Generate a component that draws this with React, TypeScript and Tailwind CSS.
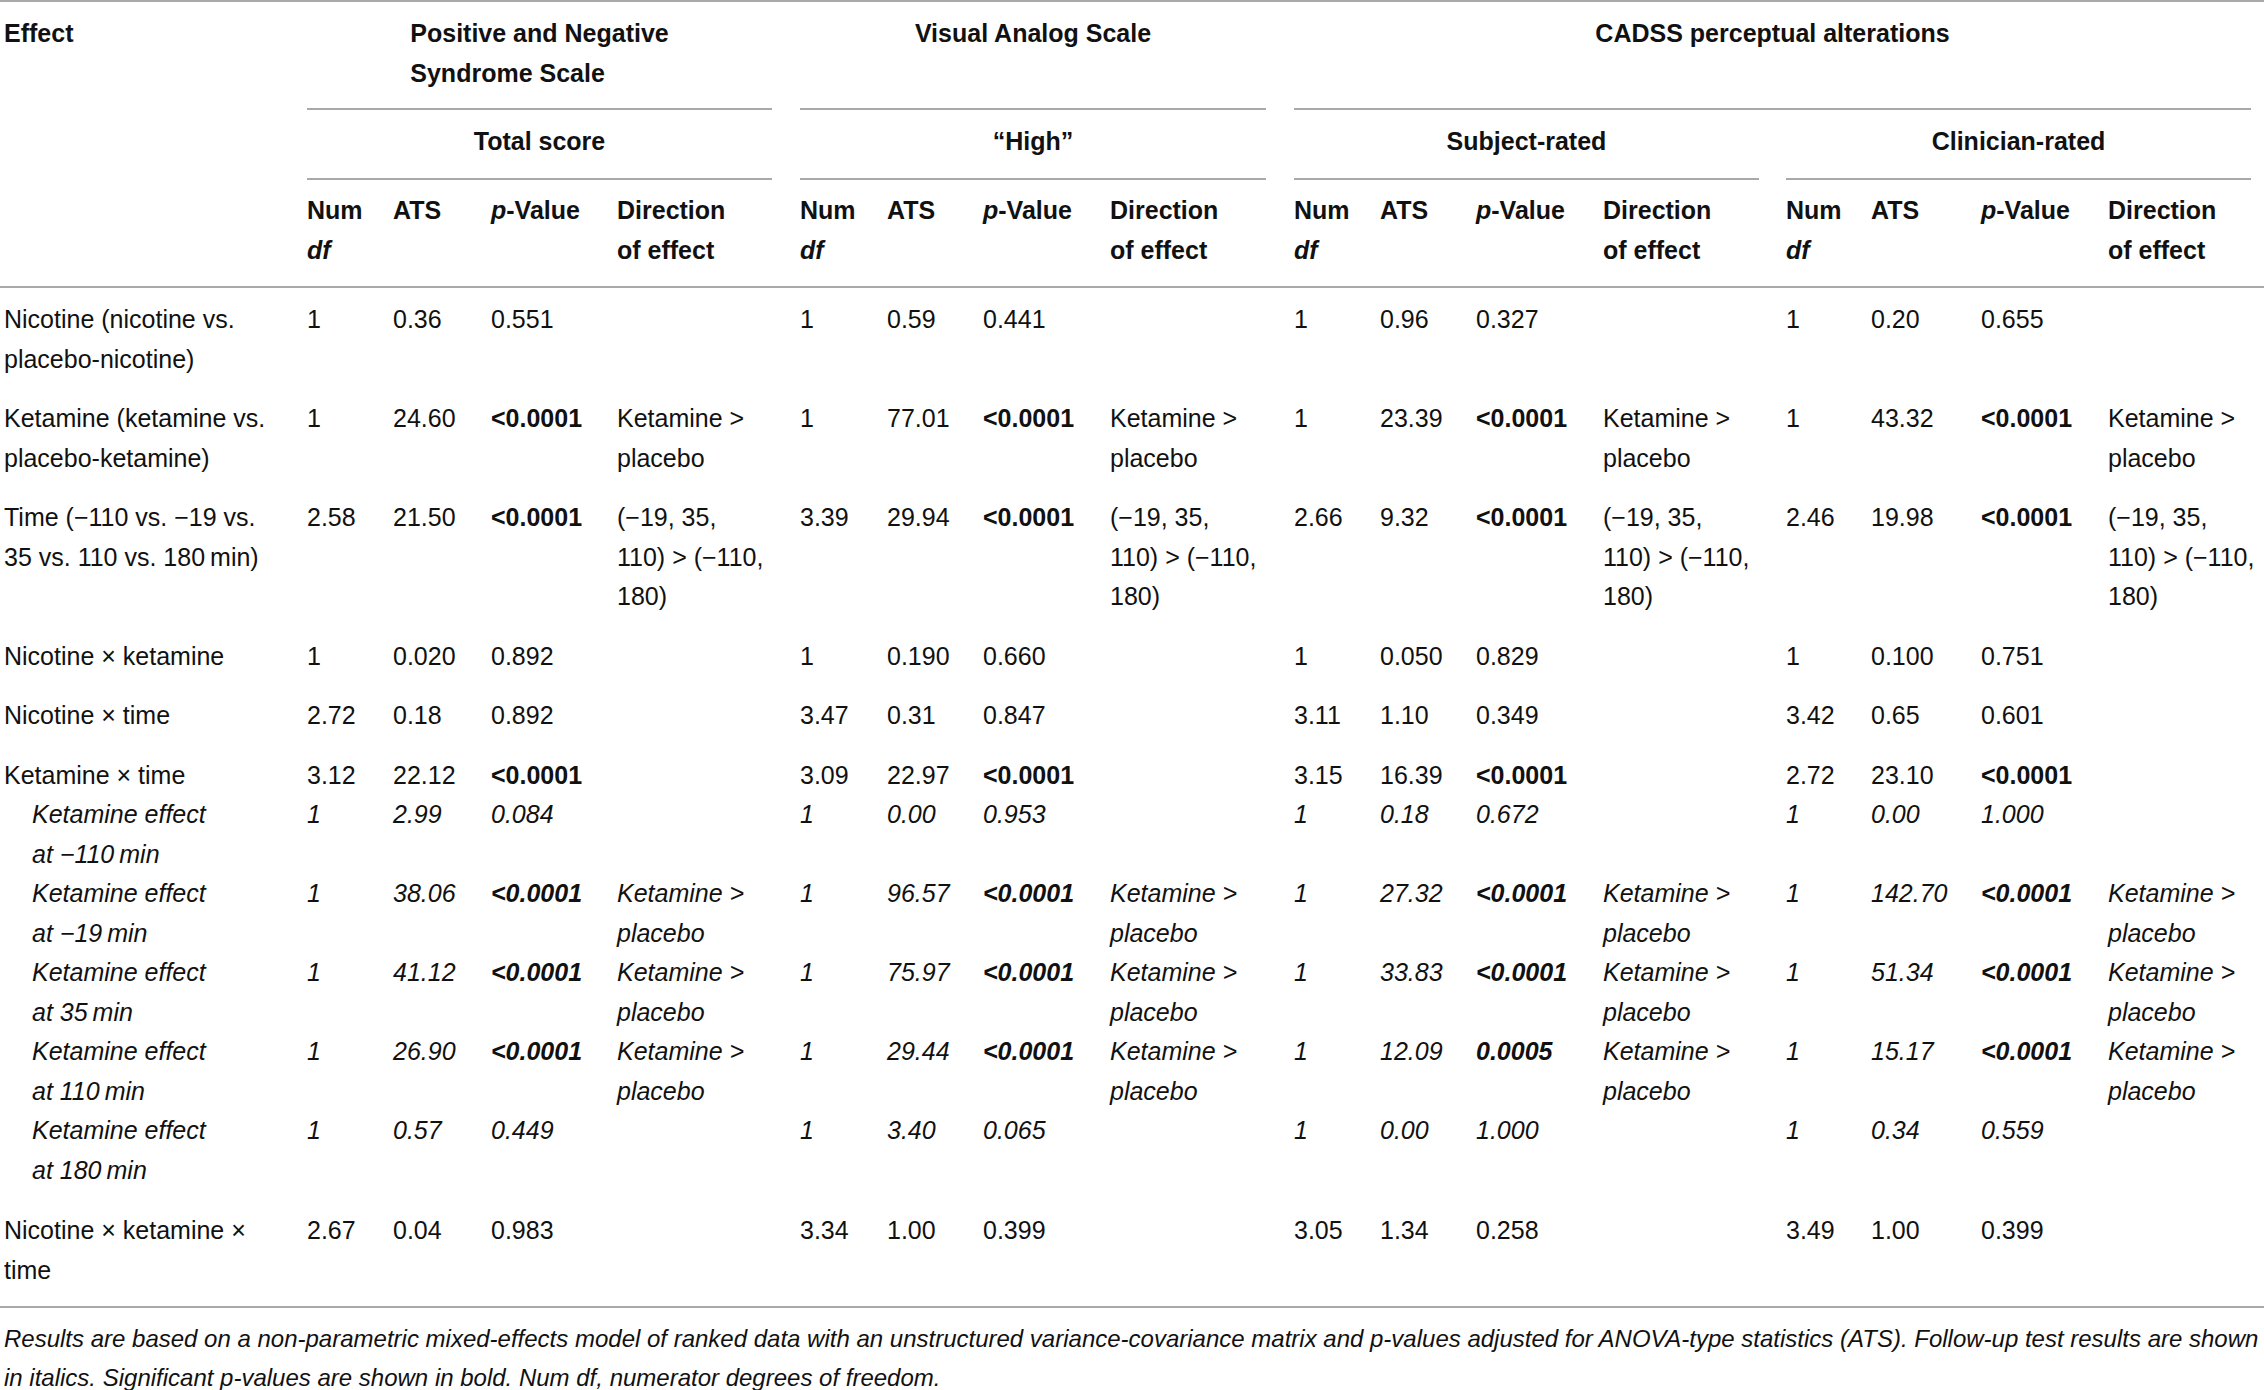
import React from 'react'

const GRID =
  'grid grid-cols-[307px_86px_98px_126px_183px_87px_96px_127px_184px_86px_96px_127px_183px_85px_110px_127px_156px]'

type Stat = [string, string, string, string]

type Row = {
  label: string[]
  sub?: boolean
  pad: string
  groups: [Stat, Stat, Stat, Stat]
}

// direction-of-effect shorthands
const KP = 'kp'
const TM = 'time'

const ROWS: Row[] = [
  {
    label: ['Nicotine (nicotine vs.', 'placebo-nicotine)'],
    pad: 'pt-[12px] pb-[10px]',
    groups: [
      ['1', '0.36', '0.551', ''],
      ['1', '0.59', '0.441', ''],
      ['1', '0.96', '0.327', ''],
      ['1', '0.20', '0.655', ''],
    ],
  },
  {
    label: ['Ketamine (ketamine vs.', 'placebo-ketamine)'],
    pad: 'py-[10px]',
    groups: [
      ['1', '24.60', '*<0.0001', KP],
      ['1', '77.01', '*<0.0001', KP],
      ['1', '23.39', '*<0.0001', KP],
      ['1', '43.32', '*<0.0001', KP],
    ],
  },
  {
    label: ['Time (\u2212110 vs. \u221219 vs.', '35 vs. 110 vs. 180\u2009min)'],
    pad: 'py-[10px]',
    groups: [
      ['2.58', '21.50', '*<0.0001', TM],
      ['3.39', '29.94', '*<0.0001', TM],
      ['2.66', '9.32', '*<0.0001', TM],
      ['2.46', '19.98', '*<0.0001', TM],
    ],
  },
  {
    label: ['Nicotine \u00d7 ketamine'],
    pad: 'py-[10px]',
    groups: [
      ['1', '0.020', '0.892', ''],
      ['1', '0.190', '0.660', ''],
      ['1', '0.050', '0.829', ''],
      ['1', '0.100', '0.751', ''],
    ],
  },
  {
    label: ['Nicotine \u00d7 time'],
    pad: 'py-[10px]',
    groups: [
      ['2.72', '0.18', '0.892', ''],
      ['3.47', '0.31', '0.847', ''],
      ['3.11', '1.10', '0.349', ''],
      ['3.42', '0.65', '0.601', ''],
    ],
  },
  {
    label: ['Ketamine \u00d7 time'],
    pad: 'pt-[10px]',
    groups: [
      ['3.12', '22.12', '*<0.0001', ''],
      ['3.09', '22.97', '*<0.0001', ''],
      ['3.15', '16.39', '*<0.0001', ''],
      ['2.72', '23.10', '*<0.0001', ''],
    ],
  },
  {
    label: ['Ketamine effect', 'at \u2212110\u2009min'],
    sub: true,
    pad: '',
    groups: [
      ['1', '2.99', '0.084', ''],
      ['1', '0.00', '0.953', ''],
      ['1', '0.18', '0.672', ''],
      ['1', '0.00', '1.000', ''],
    ],
  },
  {
    label: ['Ketamine effect', 'at \u221219\u2009min'],
    sub: true,
    pad: '',
    groups: [
      ['1', '38.06', '*<0.0001', KP],
      ['1', '96.57', '*<0.0001', KP],
      ['1', '27.32', '*<0.0001', KP],
      ['1', '142.70', '*<0.0001', KP],
    ],
  },
  {
    label: ['Ketamine effect', 'at 35\u2009min'],
    sub: true,
    pad: '',
    groups: [
      ['1', '41.12', '*<0.0001', KP],
      ['1', '75.97', '*<0.0001', KP],
      ['1', '33.83', '*<0.0001', KP],
      ['1', '51.34', '*<0.0001', KP],
    ],
  },
  {
    label: ['Ketamine effect', 'at 110\u2009min'],
    sub: true,
    pad: '',
    groups: [
      ['1', '26.90', '*<0.0001', KP],
      ['1', '29.44', '*<0.0001', KP],
      ['1', '12.09', '*0.0005', KP],
      ['1', '15.17', '*<0.0001', KP],
    ],
  },
  {
    label: ['Ketamine effect', 'at 180\u2009min'],
    sub: true,
    pad: 'pb-[10px]',
    groups: [
      ['1', '0.57', '0.449', ''],
      ['1', '3.40', '0.065', ''],
      ['1', '0.00', '1.000', ''],
      ['1', '0.34', '0.559', ''],
    ],
  },
  {
    label: ['Nicotine \u00d7 ketamine \u00d7', 'time'],
    pad: 'pt-[11px] pb-[16px]',
    groups: [
      ['2.67', '0.04', '0.983', ''],
      ['3.34', '1.00', '0.399', ''],
      ['3.05', '1.34', '0.258', ''],
      ['3.49', '1.00', '0.399', ''],
    ],
  },
]

function Lines({ lines }: { lines: string[] }) {
  return (
    <>
      {lines.map((l, i) => (
        <React.Fragment key={i}>
          {i > 0 && <br />}
          {l}
        </React.Fragment>
      ))}
    </>
  )
}

function Direction({ kind }: { kind: string }) {
  if (kind === KP) return <Lines lines={['Ketamine >', 'placebo']} />
  if (kind === TM) return <Lines lines={['(\u221219, 35,', '110) > (\u2212110,', '180)']} />
  return null
}

function PValue({ v }: { v: string }) {
  if (v.startsWith('*')) return <span className="font-bold">{v.slice(1)}</span>
  return <>{v}</>
}

function ColHeads() {
  return (
    <>
      <div>
        Num
        <br />
        <i>df</i>
      </div>
      <div>ATS</div>
      <div>
        <i>p</i>-Value
      </div>
      <div>
        Direction
        <br />
        of effect
      </div>
    </>
  )
}

export default function App() {
  return (
    <div className="w-[2264px] min-h-[1390px] bg-white text-[#111] font-['Liberation_Sans',Arial,sans-serif] text-[25px] leading-[39.5px]">
      <div className="border-t-2 border-[#a9a9a9]" />

      {/* header */}
      <div className={`${GRID} border-b-2 border-[#a9a9a9] font-bold`}>
        <div className="row-span-3 pl-[4px] pt-[12px]">Effect</div>

        <div className="col-span-4 mr-[28px] border-b-2 border-[#a9a9a9] pt-[12px] pb-[15px] text-center">
          <span className="inline-block text-left">
            Positive and Negative
            <br />
            Syndrome Scale
          </span>
        </div>
        <div className="col-span-4 mr-[28px] border-b-2 border-[#a9a9a9] pt-[12px] pb-[15px] text-center">
          Visual Analog Scale
        </div>
        <div className="col-span-8 mr-[13px] border-b-2 border-[#a9a9a9] pt-[12px] pb-[15px] text-center">
          CADSS perceptual alterations
        </div>

        <div className="col-span-4 mr-[28px] border-b-2 border-[#a9a9a9] pt-[12px] pb-[16.5px] text-center">
          Total score
        </div>
        <div className="col-span-4 mr-[28px] border-b-2 border-[#a9a9a9] pt-[12px] pb-[16.5px] text-center">
          {'\u201cHigh\u201d'}
        </div>
        <div className="col-span-4 mr-[27px] border-b-2 border-[#a9a9a9] pt-[12px] pb-[16.5px] text-center">
          Subject-rated
        </div>
        <div className="col-span-4 mr-[13px] border-b-2 border-[#a9a9a9] pt-[12px] pb-[16.5px] text-center">
          Clinician-rated
        </div>

        <div className="col-span-16 grid grid-cols-subgrid pt-[11px] pb-[16px]">
          <ColHeads />
          <ColHeads />
          <ColHeads />
          <ColHeads />
        </div>
      </div>

      {/* body */}
      <div className="border-b-2 border-[#a9a9a9]">
        {ROWS.map((row, ri) => (
          <div key={ri} className={`${GRID} ${row.pad} ${row.sub ? 'italic' : ''}`}>
            <div className={row.sub ? 'pl-[32px]' : 'pl-[4px]'}>
              <Lines lines={row.label} />
            </div>
            {row.groups.map((g, gi) => (
              <React.Fragment key={gi}>
                <div>{g[0]}</div>
                <div>{g[1]}</div>
                <div>
                  <PValue v={g[2]} />
                </div>
                <div className="whitespace-nowrap">
                  <Direction kind={g[3]} />
                </div>
              </React.Fragment>
            ))}
          </div>
        ))}
      </div>

      {/* footnote */}
      <p className="pl-[4px] pt-[12px] italic whitespace-nowrap text-[24px] leading-[38.5px]">
        Results are based on a non-parametric mixed-effects model of ranked data with an unstructured
        variance-covariance matrix and p-values adjusted for ANOVA-type statistics (ATS). Follow-up test
        results are shown
        <br />
        in italics. Significant p-values are shown in bold. Num df, numerator degrees of freedom.
      </p>
    </div>
  )
}
